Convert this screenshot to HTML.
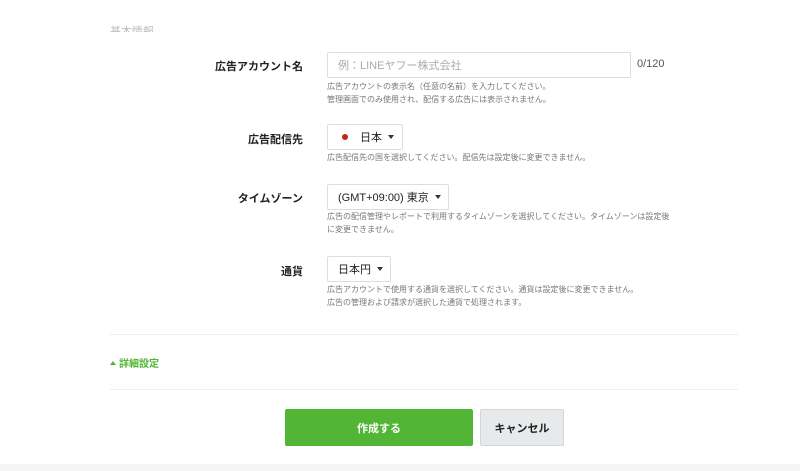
<!DOCTYPE html>
<html><head><meta charset="utf-8"><style>
*{margin:0;padding:0;box-sizing:border-box}
body{width:800px;height:471px;overflow:hidden;background:#fff;font-family:"Liberation Sans","Noto Sans CJK JP",sans-serif;color:#333;position:relative}
.a{position:absolute}
.lbl{position:absolute;right:497px;font-size:11px;font-weight:bold;color:#222;white-space:nowrap}
.box{position:absolute;border:1px solid #ddd;border-radius:2px;background:#fff;font-size:11px;color:#222;display:flex;align-items:center;padding-left:10px;white-space:nowrap}
.help{position:absolute;left:327px;font-size:8px;color:#777;line-height:12.5px;white-space:nowrap}
.car{display:inline-block;width:0;height:0;border-left:3px solid transparent;border-right:3px solid transparent;border-top:4px solid #333;margin-left:6px}
.hr{position:absolute;left:110px;width:628px;height:1px;background:#eee}
</style></head><body>
<div class="a" style="left:110px;top:22px;font-size:11px;color:#bbb;height:10px;overflow:hidden;line-height:20px">基本情報</div>

<div class="lbl" style="top:58px">広告アカウント名</div>
<div class="box" style="left:327px;top:52px;width:304px;height:26px;color:#aaa;font-size:11px">例：LINEヤフー株式会社</div>
<div class="a" style="left:637px;top:58px;font-size:11px;color:#555">0/120</div>
<div class="help" style="top:81px">広告アカウントの表示名（任意の名前）を入力してください。<br>管理画面でのみ使用され、配信する広告には表示されません。</div>

<div class="lbl" style="top:131px">広告配信先</div>
<div class="box" style="left:327px;top:124px;width:76px;height:26px;padding-left:14px"><span style="display:inline-block;width:6px;height:6px;border-radius:50%;background:#c8201d;margin-right:12px"></span>日本<span class="car"></span></div>
<div class="help" style="top:152px">広告配信先の国を選択してください。配信先は設定後に変更できません。</div>

<div class="lbl" style="top:190px">タイムゾーン</div>
<div class="box" style="left:327px;top:184px;width:122px;height:26px">(GMT+09:00) 東京<span class="car"></span></div>
<div class="help" style="top:211px">広告の配信管理やレポートで利用するタイムゾーンを選択してください。タイムゾーンは設定後<br>に変更できません。</div>

<div class="lbl" style="top:263px">通貨</div>
<div class="box" style="left:327px;top:256px;width:64px;height:26px">日本円<span class="car"></span></div>
<div class="help" style="top:284px">広告アカウントで使用する通貨を選択してください。通貨は設定後に変更できません。<br>広告の管理および請求が選択した通貨で処理されます。</div>

<div class="hr" style="top:334px"></div>
<div class="a" style="left:110px;top:355px;font-size:10px;color:#52b535;font-weight:bold"><span style="display:inline-block;border-left:3px solid transparent;border-right:3px solid transparent;border-bottom:4px solid #52b535;margin-right:3px;vertical-align:2px"></span>詳細設定</div>
<div class="hr" style="top:389px"></div>

<div class="a" style="left:285px;top:409px;width:188px;height:37px;background:#52b535;border-radius:2px;color:#fff;font-size:11px;font-weight:bold;display:flex;align-items:center;justify-content:center">作成する</div>
<div class="a" style="left:480px;top:409px;width:84px;height:37px;background:#e8e9eb;border:1px solid #d5d6d8;border-radius:2px;color:#222;font-size:11px;font-weight:bold;display:flex;align-items:center;justify-content:center">キャンセル</div>
<div class="a" style="left:0;top:464px;width:800px;height:7px;background:#f5f5f5"></div>
</body></html>
